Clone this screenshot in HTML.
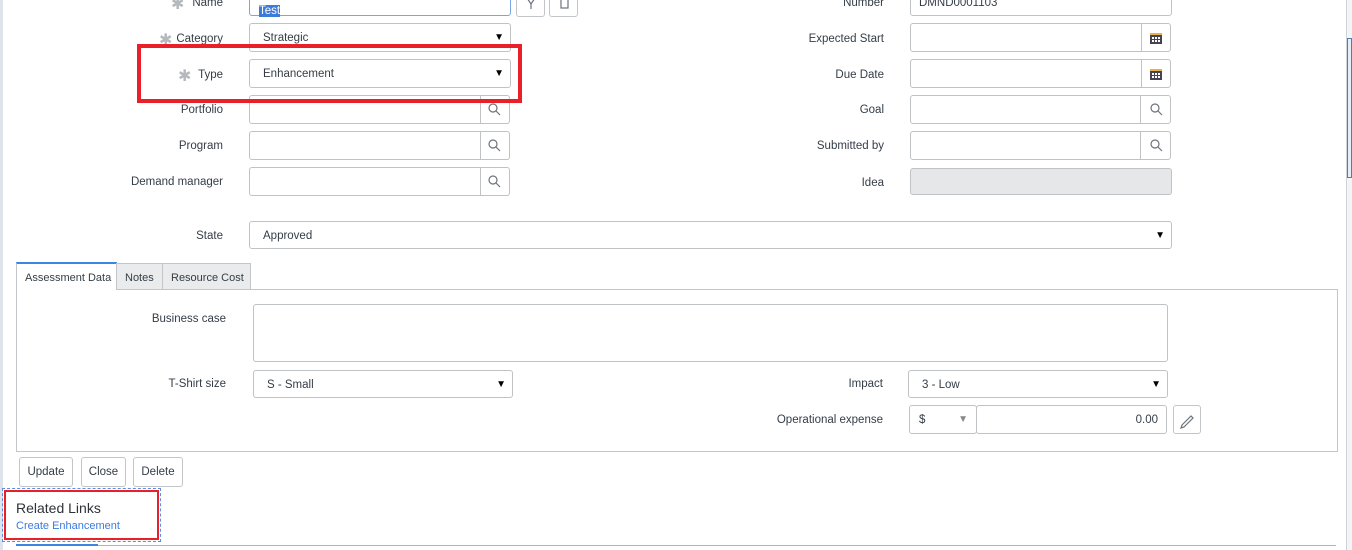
<!DOCTYPE html>
<html><head><style>
*{box-sizing:border-box;margin:0;padding:0}
body{width:1352px;height:550px;overflow:hidden;background:#fff;font-family:"Liberation Sans",sans-serif;font-size:11.5px;color:#343d47;position:relative}
.a{position:absolute}
.lbl{position:absolute;text-align:right;width:200px;line-height:14px}
.in{position:absolute;border:1px solid #bfc3c6;border-radius:3px;background:#fff;padding-left:13px;line-height:29px;color:#343d47}
.arr{position:absolute;right:6px;top:-1px;font-size:10px;color:#000}
.btn{position:absolute;border:1px solid #c3c6c9;border-radius:3px;background:#fff}
.star{color:#b5b9bd;font-size:16px;position:absolute}
</style></head><body>
<div class="a" style="left:0;top:0;width:3px;height:550px;background:#dfe4ec"></div>

<div class="star" style="left:171px;top:-6px">✱</div><div class="lbl" style="left:23px;top:-4px">Name</div>
<div class="in" style="left:249px;top:-12px;width:262px;height:28px;border-color:#7aa7e4;padding-left:9px;line-height:26px"><span style="background:#3d7bdb;color:#fff;position:relative;top:9px">Test</span></div>
<div class="btn" style="left:516px;top:-12px;width:29px;height:29px"></div>
<div class="btn" style="left:549px;top:-12px;width:29px;height:29px"></div>

<div class="star" style="left:159px;top:30px">✱</div><div class="lbl" style="left:23px;top:32px">Category</div>
<div class="in" style="left:249px;top:23px;width:262px;height:29px">Strategic<span class="arr">▼</span></div>
<div class="star" style="left:178px;top:66px">✱</div><div class="lbl" style="left:23px;top:68px">Type</div>
<div class="in" style="left:249px;top:59px;width:262px;height:29px">Enhancement<span class="arr">▼</span></div>

<div class="lbl" style="left:23px;top:103px">Portfolio</div>
<div class="in" style="left:249px;top:95px;width:261px;height:29px"></div>
<div class="lbl" style="left:23px;top:139px">Program</div>
<div class="in" style="left:249px;top:131px;width:261px;height:29px"></div>
<div class="lbl" style="left:23px;top:175px">Demand manager</div>
<div class="in" style="left:249px;top:167px;width:261px;height:29px"></div>

<div class="lbl" style="left:684px;top:-4px">Number</div>
<div class="in" style="left:910px;top:-12px;width:262px;height:28px;padding-left:8px;line-height:26px"><span style="position:relative;top:1px">DMND0001103</span></div>
<div class="lbl" style="left:684px;top:32px">Expected Start</div>
<div class="in" style="left:910px;top:23px;width:261px;height:29px"></div>
<div class="lbl" style="left:684px;top:68px">Due Date</div>
<div class="in" style="left:910px;top:59px;width:261px;height:29px"></div>
<div class="lbl" style="left:684px;top:103px">Goal</div>
<div class="in" style="left:910px;top:95px;width:261px;height:29px"></div>
<div class="lbl" style="left:684px;top:139px">Submitted by</div>
<div class="in" style="left:910px;top:131px;width:261px;height:29px"></div>
<div class="lbl" style="left:684px;top:176px">Idea</div>
<div class="in" style="left:910px;top:168px;width:262px;height:27px;background:#e6e7e8"></div>

<div class="lbl" style="left:23px;top:229px">State</div>
<div class="in" style="left:249px;top:221px;width:923px;height:28px">Approved<span class="arr">▼</span></div>

<svg class="a" style="left:0;top:0" width="1352" height="550">
 <g fill="none" stroke="#6b737b" stroke-width="1.2">
  <circle cx="493" cy="108" r="4"/><line x1="496" y1="111" x2="500" y2="115"/>
  <circle cx="493" cy="144" r="4"/><line x1="496" y1="147" x2="500" y2="151"/>
  <circle cx="493" cy="180" r="4"/><line x1="496" y1="183" x2="500" y2="187"/>
  <circle cx="1155" cy="108" r="4"/><line x1="1158" y1="111" x2="1162" y2="115"/>
  <circle cx="1155" cy="144" r="4"/><line x1="1158" y1="147" x2="1162" y2="151"/>
  <path d="M527 -2 L531 4 L535 -2 M531 4 V9"/>
  <rect x="561" y="-2" width="7" height="10"/>
  <path d="M1182 425 L1191 416 L1193 418 L1184 427 L1181 428 Z"/>
 </g>
 <g stroke="#bfc3c6"><line x1="480.5" y1="96" x2="480.5" y2="124"/><line x1="480.5" y1="132" x2="480.5" y2="160"/><line x1="480.5" y1="168" x2="480.5" y2="196"/>
 <line x1="1141.5" y1="24" x2="1141.5" y2="52"/><line x1="1141.5" y1="60" x2="1141.5" y2="88"/><line x1="1140.5" y1="96" x2="1140.5" y2="124"/><line x1="1140.5" y1="132" x2="1140.5" y2="160"/></g>
 <g fill="#445"><rect x="1150" y="33" width="12" height="11"/><rect x="1150" y="69" width="12" height="11"/></g>
 <g fill="#e9b24a"><rect x="1150" y="33" width="12" height="2"/><rect x="1150" y="69" width="12" height="2"/></g>
 <g fill="#fff"><rect x="1152" y="37" width="2" height="2"/><rect x="1155" y="37" width="2" height="2"/><rect x="1158" y="37" width="2" height="2"/><rect x="1152" y="40" width="2" height="2"/><rect x="1155" y="40" width="2" height="2"/><rect x="1158" y="40" width="2" height="2"/>
 <rect x="1152" y="73" width="2" height="2"/><rect x="1155" y="73" width="2" height="2"/><rect x="1158" y="73" width="2" height="2"/><rect x="1152" y="76" width="2" height="2"/><rect x="1155" y="76" width="2" height="2"/><rect x="1158" y="76" width="2" height="2"/></g>
</svg>

<div class="a" style="left:16px;top:289px;width:1322px;height:163px;border:1px solid #c3c6c9"></div>
<div class="a" style="left:16px;top:262px;width:101px;height:28px;background:#fff;border-top:2px solid #3a86e0;border-left:1px solid #c3c6c9;border-right:1px solid #c3c6c9;padding:8px 0 0 8px;font-size:11px">Assessment Data</div>
<div class="a" style="left:116px;top:263px;width:47px;height:27px;background:#e9ebed;border:1px solid #c3c6c9;padding:8px 0 0 8px;font-size:11px">Notes</div>
<div class="a" style="left:162px;top:263px;width:89px;height:27px;background:#e9ebed;border:1px solid #c3c6c9;padding:8px 0 0 8px;font-size:11px">Resource Cost</div>

<div class="lbl" style="left:26px;top:312px">Business case</div>
<div class="in" style="left:253px;top:304px;width:915px;height:58px"></div>
<div class="lbl" style="left:26px;top:377px">T-Shirt size</div>
<div class="in" style="left:253px;top:370px;width:260px;height:28px">S - Small<span class="arr">▼</span></div>
<div class="lbl" style="left:683px;top:377px">Impact</div>
<div class="in" style="left:908px;top:370px;width:260px;height:28px">3 - Low<span class="arr">▼</span></div>
<div class="lbl" style="left:683px;top:413px">Operational expense</div>
<div class="in" style="left:909px;top:405px;width:68px;height:29px;padding-left:9px">$<span class="arr" style="color:#888;right:8px">▼</span></div>
<div class="in" style="left:976px;top:405px;width:191px;height:29px;text-align:right;padding-right:8px">0.00</div>
<div class="btn" style="left:1173px;top:405px;width:28px;height:29px;background:transparent"></div>

<div class="btn" style="left:19px;top:457px;width:54px;height:30px;text-align:center;line-height:28px">Update</div>
<div class="btn" style="left:81px;top:457px;width:45px;height:30px;text-align:center;line-height:28px">Close</div>
<div class="btn" style="left:133px;top:457px;width:50px;height:30px;text-align:center;line-height:28px">Delete</div>

<div class="a" style="left:137px;top:44px;width:385px;height:59px;border:4px solid #e8202a"></div>
<div class="a" style="left:2px;top:488px;width:159px;height:54px;border:1px dashed #5a8fe0"></div>
<div class="a" style="left:4px;top:490px;width:155px;height:50px;border:2px solid #e8202a"></div>
<div class="a" style="left:16px;top:500px;font-size:14px;color:#2e3338">Related Links</div>
<div class="a" style="left:16px;top:520px;font-size:11px;color:#3a7ae0">Create Enhancement</div>

<div class="a" style="left:16px;top:545px;width:1320px;height:1px;background:#b0b4b8"></div>
<div class="a" style="left:16px;top:544px;width:82px;height:2px;background:#3a86e0"></div>
<div class="a" style="left:1346px;top:0;width:6px;height:550px;background:#f3f4f5;border-left:1px solid #d0d3d6"></div>
<div class="a" style="left:1347px;top:38px;width:5px;height:140px;background:#e3eef9;border:1px solid #4a7fbf"></div>
</body></html>
